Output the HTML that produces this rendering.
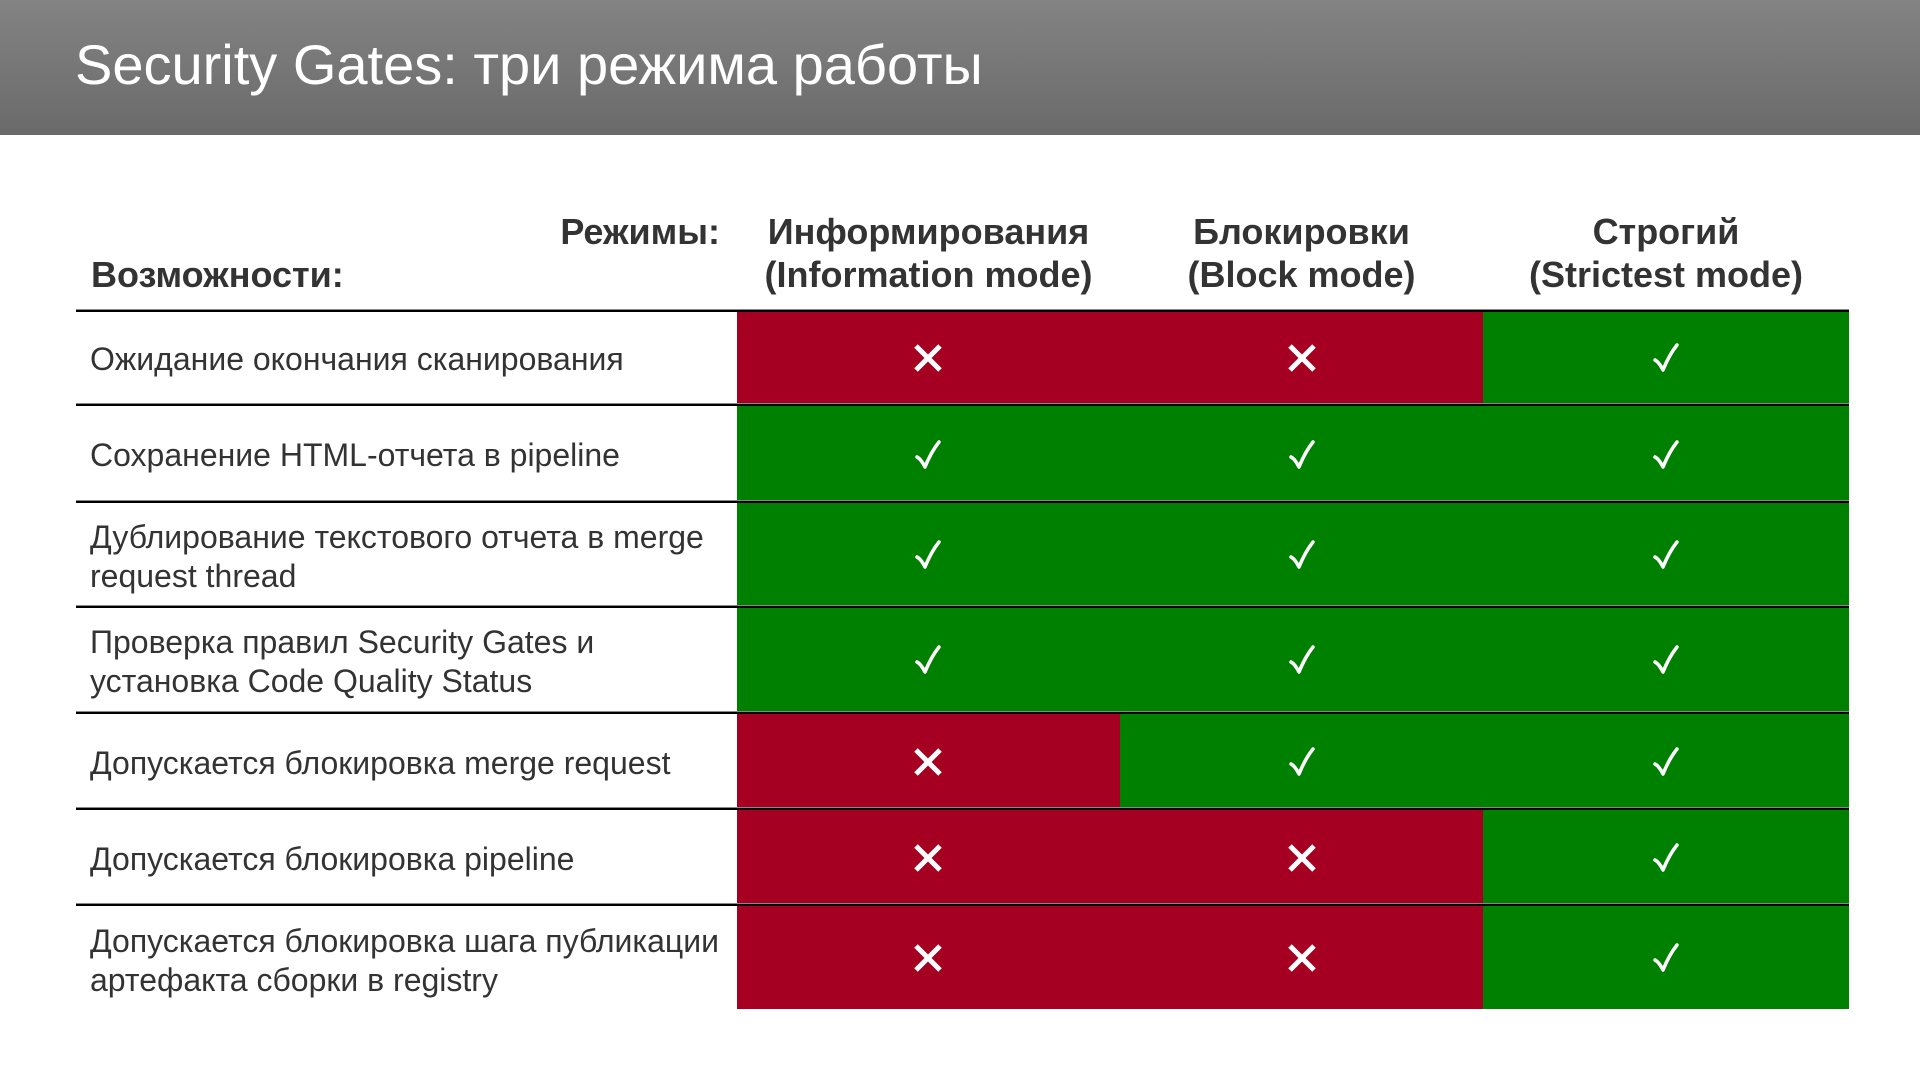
<!DOCTYPE html>
<html><head><meta charset="utf-8"><style>
*{margin:0;padding:0;box-sizing:border-box}
body{width:1920px;height:1080px;background:#fff;position:relative;overflow:hidden;font-family:"Liberation Sans",sans-serif}
.hdr{position:absolute;left:0;top:0;width:1920px;height:135px;background:linear-gradient(to bottom,#838383,#6a6a6a)}
.title{position:absolute;left:75px;top:32px;font-size:56px;color:#fff;white-space:nowrap}
.h{position:absolute;font-weight:bold;font-size:36px;color:#333;line-height:43px;text-align:center;white-space:nowrap}
.cell{position:absolute}
.r{background:#A50021}.g{background:#008000}
.line{position:absolute;left:76px;width:1773px;height:3px;background:#000;border-top:1px solid #888}
.t{position:absolute;left:90px;font-size:32px;color:#333;line-height:39px;width:700px;white-space:nowrap}
</style></head><body>
<div class="hdr"></div>
<div class="title">Security Gates: три режима работы</div>
<div class="h" style="left:520px;width:200px;text-align:right;top:210px">Режимы:</div>
<div class="h" style="left:91px;text-align:left;top:253px">Возможности:</div>
<div class="h" style="left:737px;width:383px;top:210px">Информирования<br>(Information mode)</div>
<div class="h" style="left:1120px;width:363px;top:210px">Блокировки<br>(Block mode)</div>
<div class="h" style="left:1483px;width:366px;top:210px">Строгий<br>(Strictest mode)</div>

<div class="cell r" style="left:737px;top:311px;width:746px;height:94px"></div>
<div class="cell g" style="left:1483px;top:311px;width:366px;height:94px"></div>
<div class="cell g" style="left:737px;top:405px;width:1112px;height:308px"></div>
<div class="cell r" style="left:737px;top:713px;width:383px;height:96px"></div>
<div class="cell g" style="left:1120px;top:713px;width:729px;height:96px"></div>
<div class="cell r" style="left:737px;top:809px;width:746px;height:200px"></div>
<div class="cell g" style="left:1483px;top:809px;width:366px;height:200px"></div>

<div class="line" style="top:309px"></div>
<div class="line" style="top:403px"></div>
<div class="line" style="top:500px"></div>
<div class="line" style="top:605px"></div>
<div class="line" style="top:711px"></div>
<div class="line" style="top:807px"></div>
<div class="line" style="top:903px"></div>

<div class="t" style="top:340px">Ожидание окончания сканирования</div>
<div class="t" style="top:436px">Сохранение HTML-отчета в pipeline</div>
<div class="t" style="top:518px">Дублирование текстового отчета в merge<br>request thread</div>
<div class="t" style="top:623px">Проверка правил Security Gates и<br>установка Code Quality Status</div>
<div class="t" style="top:744px">Допускается блокировка merge request</div>
<div class="t" style="top:840px">Допускается блокировка pipeline</div>
<div class="t" style="top:922px">Допускается блокировка шага публикации<br>артефакта сборки в registry</div>

<svg width="1920" height="1080" style="position:absolute;left:0;top:0">
<defs>
<g id="x"><path d="M-12-12L12 12M12-12L-12 12" stroke="#fff" stroke-width="5" fill="none"/></g>
<g id="c"><path d="M-11 2Q-7 4-3 12Q3-3 11-13" stroke="#fff" stroke-width="3.5" fill="none" stroke-linecap="round" stroke-linejoin="round"/></g>
</defs>
<use href="#x" x="928" y="358"/><use href="#x" x="1302" y="358"/><use href="#c" x="1666" y="358"/>
<use href="#c" x="928" y="455"/><use href="#c" x="1302" y="455"/><use href="#c" x="1666" y="455"/>
<use href="#c" x="928" y="555"/><use href="#c" x="1302" y="555"/><use href="#c" x="1666" y="555"/>
<use href="#c" x="928" y="660"/><use href="#c" x="1302" y="660"/><use href="#c" x="1666" y="660"/>
<use href="#x" x="928" y="762"/><use href="#c" x="1302" y="762"/><use href="#c" x="1666" y="762"/>
<use href="#x" x="928" y="858"/><use href="#x" x="1302" y="858"/><use href="#c" x="1666" y="858"/>
<use href="#x" x="928" y="958"/><use href="#x" x="1302" y="958"/><use href="#c" x="1666" y="958"/>
</svg>
</body></html>
